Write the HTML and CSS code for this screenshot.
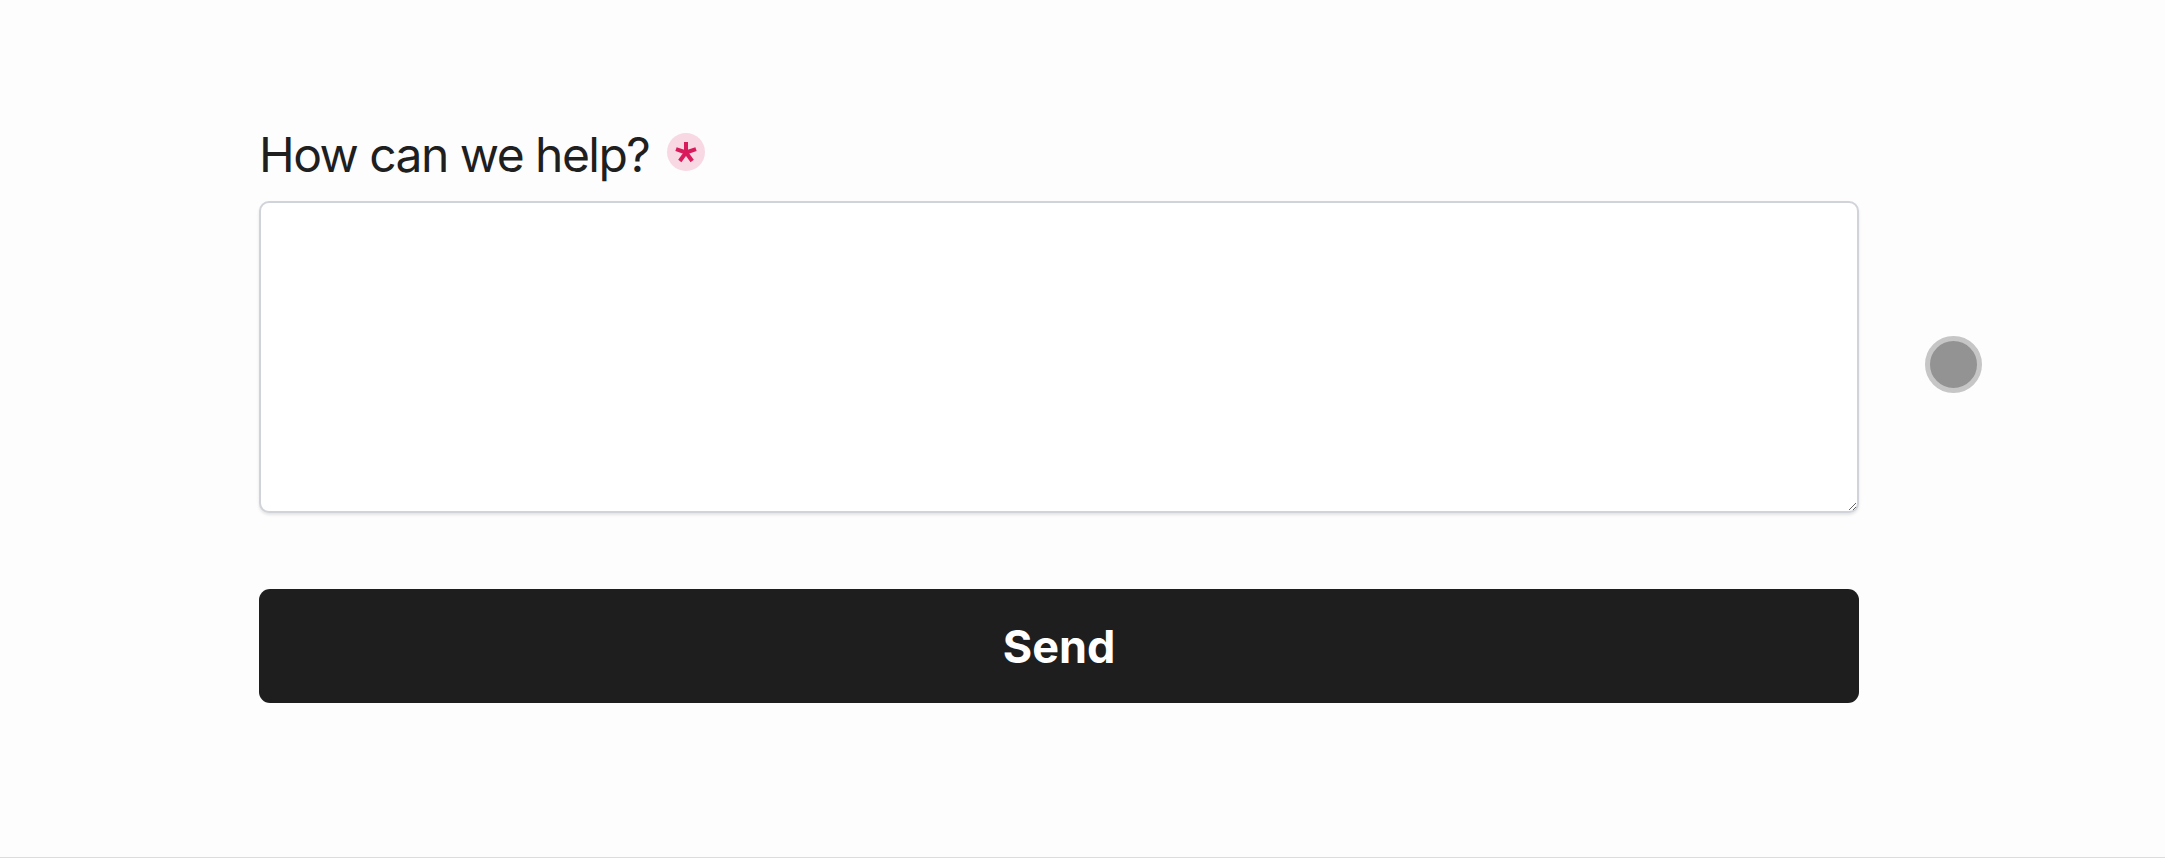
FILE: index.html
```html
<!DOCTYPE html>
<html lang="en">
<head>
<meta charset="utf-8">
<title>How can we help?</title>
<link rel="stylesheet" href="styles.css">
</head>
<body>
<div class="page">
  <form class="form">
    <label class="label" for="msg"><span class="label-text">How can we help?</span>
      <span class="req"><svg viewBox="0 0 38 38" width="38" height="38" aria-hidden="true"><g stroke="#d81b5c" stroke-width="4" stroke-linecap="butt"><line x1="19" y1="19.5" x2="19" y2="9"/><line x1="19" y1="19.5" x2="29" y2="16.2"/><line x1="19" y1="19.5" x2="25.2" y2="28"/><line x1="19" y1="19.5" x2="12.8" y2="28"/><line x1="19" y1="19.5" x2="9" y2="16.2"/></g></svg></span>
    </label>
    <textarea id="msg" class="field"></textarea>
    <button type="button" class="send">Send</button>
  </form>
  <div class="dot"></div>
</div>
</body>
</html>
```
FILE: styles.css
```css
html, body {
  margin: 0;
  padding: 0;
  background: #fdfdfd;
}
body {
  font-family: Inter, "Noto Sans", sans-serif;
}
.page {
  height: 858px;
  box-sizing: border-box;
  border-bottom: 1px solid #dcdcdc;
  display: flex;
  align-items: flex-start;
  padding-left: 259px;
  padding-top: 126px;
  overflow: hidden;
}
.form {
  width: 1600px;
  display: flex;
  flex-direction: column;
}
.label {
  font-size: 48px;
  line-height: 58px;
  color: #1f1f1f;
  display: flex;
  align-items: center;
  gap: 18px;
}
.label-text {
  letter-spacing: -0.032em;
}
.req {
  width: 38px;
  height: 38px;
  border-radius: 50%;
  background: #f8d8e2;
  display: inline-flex;
  margin-top: -6px;
}
.req svg { display: block; }
.field {
  margin-top: 17px;
  height: 312px;
  box-sizing: border-box;
  border: 2px solid #d0d3d9;
  border-radius: 10px;
  background: #fff;
  box-shadow: 0 2px 3px rgba(0,0,0,0.1);
  font-family: inherit;
  font-size: 32px;
  padding: 16px;
  resize: vertical;
}
.send {
  margin-top: 76px;
  height: 114px;
  border: 0;
  border-radius: 11px;
  background: #1e1e1e;
  color: #ffffff;
  font-family: inherit;
  font-size: 45px;
  font-weight: 700;
}
.dot {
  width: 47px;
  height: 47px;
  border-radius: 50%;
  background: #939393;
  border: 5px solid #c6c6c6;
  margin-left: 66px;
  margin-top: 210px;
}
```
